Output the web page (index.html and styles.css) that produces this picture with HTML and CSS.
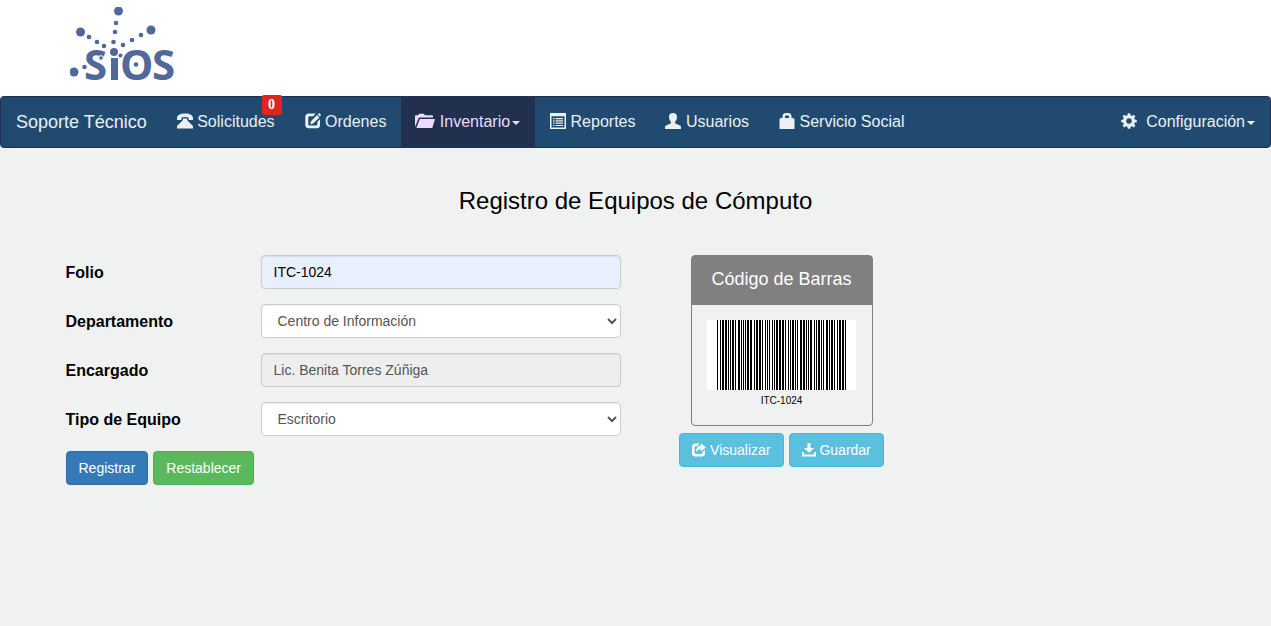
FILE: index.html
```html
<!DOCTYPE html>
<html lang="es">
<head>
<meta charset="utf-8">
<title>Registro de Equipos de Cómputo</title>
<link rel="stylesheet" href="styles.css">
</head>
<body>
<header class="masthead">
  <svg class="logo" viewBox="0 0 110 89" width="110" height="89" role="img" aria-label="SIOS">
    <g fill="#53689a">
      <circle cx="48.500" cy="4" r="4.500"/><circle cx="46" cy="16" r="2.300"/><circle cx="45" cy="25" r="2.300"/><circle cx="43.500" cy="35" r="2.300"/>
      <circle cx="10.500" cy="25" r="4.500"/><circle cx="19" cy="30" r="2.300"/><circle cx="27" cy="35" r="2.300"/><circle cx="34" cy="39" r="2.300"/>
      <circle cx="81" cy="23" r="4.500"/><circle cx="71" cy="28" r="2.300"/><circle cx="62" cy="33" r="2.300"/><circle cx="53" cy="38" r="2.300"/>
      <circle cx="4" cy="65" r="4.500"/><circle cx="14.500" cy="60" r="2.300"/><circle cx="50.500" cy="48.500" r="2"/><circle cx="66" cy="57.500" r="2.300"/>
      <circle cx="44" cy="45" r="4"/>
      <rect x="41" y="51" width="7" height="22"/>
      <text class="logo-text" x="14" y="73">S</text>
      <text class="logo-text" x="50" y="73">O</text>
      <text class="logo-text" x="82" y="73">S</text>
    </g>
    <circle cx="31" cy="51" r="2.300" fill="#53689a" stroke="#fff" stroke-width="1"/>
  </svg>
</header>

<nav class="navbar">
  <a class="brand" href="#">Soporte Técnico</a>
  <ul class="menu">
    <li><a href="#"><svg class="icon" viewBox="0 0 16 16"><path d="M0 5.500C0 2 3 .5 8 .5s8 1.500 8 5V7h-4.500V4.500C9.500 3.800 6.500 3.800 4.500 4.500V7H0zM6 5.500h4V7l6 6v2.500H0V13l6-6z"/></svg> Solicitudes</a><span class="badge">0</span></li>
    <li><a href="#"><svg class="icon" viewBox="0 0 16 16"><path d="M4 .5h6.500L8.300 3.300H4.500q-1.200 0-1.200 1.200v6.700q0 1.200 1.200 1.200h6.700q1.200 0 1.200-1.200V8.700L15 6.200V12q0 3.300-3.300 3.300H4q-3.700 0-3.700-3.500V4Q.3.500 4 .5zM12 2l2.400 2.400-6.200 6-3 .9.800-3zM12.700 1.300l.9-.9q.5-.4 1 0l1.100 1.100q.4.500 0 1l-.8.900z"/></svg> Ordenes</a></li>
    <li class="active"><a href="#"><svg class="icon icon-wide" viewBox="0 0 20 16"><path d="M0 14V3q0-.8.800-.8H3L4.200.8h4.600L10 2.200h7q1 0 1 1V4.500H4.800q-1 0-1.400 1zM4.800 6H20l-2.700 9H1.300z"/></svg> Inventario<span class="caret"></span></a></li>
    <li><a href="#"><svg class="icon" viewBox="0 0 16 16"><path fill-rule="evenodd" d="M0 0h16v16H0zM1.500 3.300v11.200h13V3.300zM3 5h1.500v1.200H3zm2.500 0H13v1.200H5.500zM3 7.300h1.500v1.200H3zm2.500 0H13v1.200H5.500zM3 9.600h1.500v1.200H3zm2.500 0H13v1.200H5.500zM3 11.900h1.500v1.200H3zm2.500 0H13v1.200H5.500z"/></svg> Reportes</a></li>
    <li><a href="#"><svg class="icon" viewBox="0 0 16 16"><path d="M8 0c2.600 0 4 1.600 4 4 0 2-.8 3.600-1.800 4.800-.5 1 0 1.600.8 2l4 1.700q1 .5 1 1.500v2H0v-2q0-1 1-1.500l4-1.700c.8-.4 1.300-1 .8-2C4.800 7.600 4 6 4 4c0-2.400 1.400-4 4-4z"/></svg> Usuarios</a></li>
    <li><a href="#"><svg class="icon" viewBox="0 0 16 16"><path fill-rule="evenodd" d="M3.500 5V3.500Q3.500 0 7 0h2q3.500 0 3.500 3.500V5H14q1.500 0 1.500 1.500V16H.5V6.500Q.5 5 2 5zm2.500 0h4V3.500Q10 2.500 9 2.500H7q-1 0-1 1z"/></svg> Servicio Social</a></li>
  </ul>
  <ul class="menu menu-end">
    <li><a href="#"><svg class="icon" viewBox="0 0 16 16"><path fill-rule="evenodd" d="M6.800.3h2.400l.4 2 1.400.6 1.800-1.200 1.600 1.600L13.200 5l.6 1.500 2 .4v2.300l-2 .4-.6 1.400 1.200 1.800-1.600 1.600-1.800-1.200-1.400.6-.4 2H6.800l-.4-2-1.400-.6-1.800 1.200-1.600-1.600L2.800 11l-.6-1.400-2-.4V6.900l2-.4L2.800 5 1.600 3.300l1.600-1.600L5 2.900l1.400-.6zM8 5.200a2.800 2.800 0 1 0 .01 0z"/></svg>&nbsp; Configuración<span class="caret"></span></a></li>
  </ul>
</nav>

<main class="container">
  <h1 class="title">Registro de Equipos de Cómputo</h1>
  <hr class="rule">
  <div class="columns">
    <form class="form">
      <div class="field"><label for="folio">Folio</label><input class="control filled" id="folio" type="text" value="ITC-1024"></div>
      <div class="field"><label for="departamento">Departamento</label><select class="control" id="departamento"><option>Centro de Información</option></select></div>
      <div class="field"><label for="encargado">Encargado</label><input class="control" id="encargado" type="text" value="Lic. Benita Torres Zúñiga" readonly></div>
      <div class="field"><label for="tipo">Tipo de Equipo</label><select class="control" id="tipo"><option>Escritorio</option></select></div>
      <div class="actions">
        <button class="btn btn-primary" type="button">Registrar</button>
        <button class="btn btn-success" type="reset">Restablecer</button>
      </div>
    </form>
    <section class="barcode">
      <div class="panel">
        <h2 class="panel-heading">Código de Barras</h2>
        <figure class="panel-body">
          <svg class="bars" viewBox="0 0 149 70" width="149" height="70" shape-rendering="crispEdges" role="img" aria-label="Código de barras ITC-1024">
            <path fill="#fff" d="M0 0h149v70H0z"/>
            <path transform="translate(10 0)" d="M0 0h1v70h-1zM3 0h1v70h-1zM5 0h2v70h-2zM8 0h2v70h-2zM11 0h1v70h-1zM13 0h1v70h-1zM15 0h2v70h-2zM18 0h1v70h-1zM21 0h2v70h-2zM24 0h1v70h-1zM26 0h1v70h-1zM28 0h1v70h-1zM30 0h2v70h-2zM33 0h2v70h-2zM37 0h1v70h-1zM39 0h2v70h-2zM42 0h2v70h-2zM45 0h1v70h-1zM48 0h1v70h-1zM50 0h1v70h-1zM52 0h1v70h-1zM55 0h1v70h-1zM57 0h1v70h-1zM59 0h2v70h-2zM62 0h2v70h-2zM65 0h2v70h-2zM68 0h1v70h-1zM71 0h1v70h-1zM73 0h1v70h-1zM75 0h2v70h-2zM78 0h1v70h-1zM80 0h1v70h-1zM83 0h2v70h-2zM86 0h2v70h-2zM89 0h1v70h-1zM91 0h1v70h-1zM93 0h2v70h-2zM97 0h1v70h-1zM99 0h1v70h-1zM101 0h2v70h-2zM104 0h1v70h-1zM106 0h1v70h-1zM109 0h2v70h-2zM112 0h1v70h-1zM114 0h2v70h-2zM117 0h1v70h-1zM120 0h1v70h-1zM122 0h2v70h-2zM125 0h2v70h-2zM128 0h1v70h-1z"/>
          </svg>
          <figcaption class="code">ITC-1024</figcaption>
        </figure>
      </div>
      <div class="actions">
        <button class="btn btn-info" type="button"><svg class="icon icon-small" viewBox="0 0 14 14"><path d="M4 .5h3.500L5.500 3H4Q2.500 3 2.500 4.500v5Q2.500 11 4 11h5q1.500 0 1.500-1.500V9L13 7v3q0 3.500-3.500 3.500h-6Q0 13.500 0 10V4Q0 .5 4 .5zM9 .3l5 4.200-5 4V6.300Q6 6 4 9q.2-6 5-6.500z"/></svg> Visualizar</button>
        <button class="btn btn-info" type="button"><svg class="icon icon-small" viewBox="0 0 14 14"><path d="M5.500 0h3v5H12L7 9.800 2 5h3.500zM0 9h2v2.500h10V9h2v4.500H0z"/></svg> Guardar</button>
      </div>
    </section>
  </div>
</main>
</body>
</html>
```
FILE: styles.css
```css
* {
  box-sizing: border-box;
}

body {
  margin: 0;
  background: #f0f2f1;
  color: #000;
  font: 14px/20px "Liberation Sans", Arial, sans-serif;
}

.masthead {
  padding: 7px 70px 0;
  background: #fff;
}

.logo {
  display: block;
}

.logo-text {
  font: 700 42px "Open Sans", sans-serif;
}

.navbar {
  display: flex;
  border: 1px solid #20304e;
  border-radius: 4px;
  background: #204a70;
}

.navbar a {
  display: block;
  padding: 15px;
  color: #ecf0f1;
  font-size: 16px;
  text-decoration: none;
  white-space: nowrap;
}

.navbar .brand {
  font-size: 18px;
}

.menu {
  display: flex;
  margin: 0;
  padding: 0;
  list-style: none;
}

.menu li {
  position: relative;
}

.menu-end {
  margin-left: auto;
}

.menu .active a {
  padding: 15px 15px 15px 14px;
  background: #20304e;
  color: #ecdbff;
}

.icon {
  width: 16px;
  height: 16px;
  fill: currentColor;
  vertical-align: -2px;
}

.icon-wide {
  width: 20px;
}

.icon-small {
  width: 14px;
  height: 14px;
}

.caret {
  display: inline-block;
  margin-left: 2px;
  border: 4px solid transparent;
  border-top-color: currentColor;
  border-bottom: 0;
  vertical-align: middle;
}

.badge {
  position: absolute;
  top: -2px;
  right: 8px;
  width: 20px;
  border-radius: 2px;
  background: #e02424;
  color: #fff;
  font: bold 14px/20px "Liberation Serif", "Times New Roman", serif;
  text-align: center;
}

.container {
  max-width: 1170px;
  margin: 0 auto;
  padding: 0 15px;
}

.title {
  margin: 40px 0 20px;
  font-size: 24px;
  font-weight: 400;
  line-height: 26px;
  text-align: center;
}

.rule {
  margin: 0 0 20px;
  border: 0;
  border-top: 1px solid #eee;
}

.columns {
  display: grid;
  grid-template-columns: 555px 262px;
  column-gap: 30px;
}

.field {
  display: grid;
  grid-template-columns: 195px 1fr;
  align-items: center;
  margin-bottom: 15px;
}

.field label {
  padding-top: 2px;
  font-size: 16px;
  font-weight: 700;
}

.control {
  width: 100%;
  height: 34px;
  padding: 6px 12px;
  border: 1px solid #ccc;
  border-radius: 4px;
  background: #fff;
  color: #555;
  font: inherit;
  box-shadow: inset 0 1px 1px rgba(0, 0, 0, 0.075);
}

.control:read-only:not(select) {
  background: #eee;
}

.control.filled {
  background: #e8f0fe;
  color: #000;
}

.actions {
  display: flex;
  gap: 5px;
}

.btn {
  padding: 6px 12px;
  border: 1px solid;
  border-radius: 4px;
  color: #fff;
  font: inherit;
  white-space: nowrap;
}

.btn-primary {
  border-color: #2e6da4;
  background: #337ab7;
}

.btn-success {
  border-color: #4cae4c;
  background: #5cb85c;
}

.btn-info {
  border-color: #46b8da;
  background: #5bc0de;
}

.barcode {
  display: flex;
  flex-direction: column;
  align-items: center;
  gap: 7px;
}

.panel {
  width: 182px;
  border: 1px solid #808080;
  border-radius: 4px;
}

.panel-heading {
  margin: 0;
  padding: 13px 0 16px;
  background: #808080;
  color: #fff;
  font-size: 18px;
  font-weight: 400;
  text-align: center;
}

.panel-body {
  margin: 0;
  padding: 15px;
}

.bars {
  display: block;
}

.code {
  padding-top: 2px;
  font-size: 10px;
  line-height: 18px;
  text-align: center;
}
```
